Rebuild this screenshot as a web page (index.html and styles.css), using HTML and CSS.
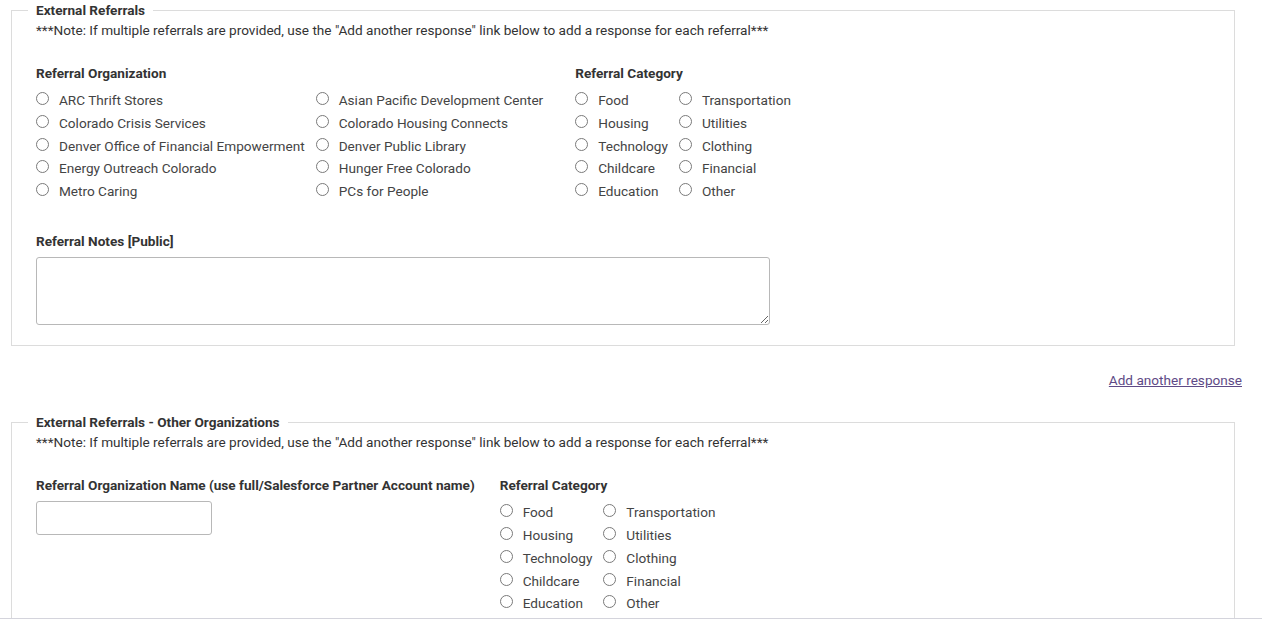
FILE: index.html
```html
<!DOCTYPE html>
<html lang="en">
<head>
<meta charset="utf-8">
<title>External Referrals</title>
<link rel="stylesheet" href="styles.css">
</head>
<body>
<div class="page">
  <fieldset class="section">
    <legend class="section-title">External Referrals</legend>
    <div class="section-body">
      <p class="note">***Note: If multiple referrals are provided, use the "Add another response" link below to add a response for each referral***</p>
      <div class="groups">
        <div class="group">
          <div class="label">Referral Organization</div>
          <div class="options">
            <label class="opt"><input type="radio" name="org"><span>ARC Thrift Stores</span></label>
            <label class="opt"><input type="radio" name="org"><span>Asian Pacific Development Center</span></label>
            <label class="opt"><input type="radio" name="org"><span>Colorado Crisis Services</span></label>
            <label class="opt"><input type="radio" name="org"><span>Colorado Housing Connects</span></label>
            <label class="opt"><input type="radio" name="org"><span>Denver Office of Financial Empowerment</span></label>
            <label class="opt"><input type="radio" name="org"><span>Denver Public Library</span></label>
            <label class="opt"><input type="radio" name="org"><span>Energy Outreach Colorado</span></label>
            <label class="opt"><input type="radio" name="org"><span>Hunger Free Colorado</span></label>
            <label class="opt"><input type="radio" name="org"><span>Metro Caring</span></label>
            <label class="opt"><input type="radio" name="org"><span>PCs for People</span></label>
          </div>
        </div>
        <div class="group">
          <div class="label">Referral Category</div>
          <div class="options">
            <label class="opt"><input type="radio" name="cat1"><span>Food</span></label>
            <label class="opt"><input type="radio" name="cat1"><span>Transportation</span></label>
            <label class="opt"><input type="radio" name="cat1"><span>Housing</span></label>
            <label class="opt"><input type="radio" name="cat1"><span>Utilities</span></label>
            <label class="opt"><input type="radio" name="cat1"><span>Technology</span></label>
            <label class="opt"><input type="radio" name="cat1"><span>Clothing</span></label>
            <label class="opt"><input type="radio" name="cat1"><span>Childcare</span></label>
            <label class="opt"><input type="radio" name="cat1"><span>Financial</span></label>
            <label class="opt"><input type="radio" name="cat1"><span>Education</span></label>
            <label class="opt"><input type="radio" name="cat1"><span>Other</span></label>
          </div>
        </div>
      </div>
      <div class="label notes-label">Referral Notes [Public]</div>
      <textarea class="notes"></textarea>
    </div>
  </fieldset>

  <div class="add-row"><a class="add-link" href="#">Add another response</a></div>

  <fieldset class="section">
    <legend class="section-title">External Referrals - Other Organizations</legend>
    <div class="section-body">
      <p class="note">***Note: If multiple referrals are provided, use the "Add another response" link below to add a response for each referral***</p>
      <div class="groups groups-other">
        <div class="group">
          <div class="label">Referral Organization Name (use full/Salesforce Partner Account name)</div>
          <input class="text-input" type="text">
        </div>
        <div class="group">
          <div class="label">Referral Category</div>
          <div class="options">
            <label class="opt"><input type="radio" name="cat2"><span>Food</span></label>
            <label class="opt"><input type="radio" name="cat2"><span>Transportation</span></label>
            <label class="opt"><input type="radio" name="cat2"><span>Housing</span></label>
            <label class="opt"><input type="radio" name="cat2"><span>Utilities</span></label>
            <label class="opt"><input type="radio" name="cat2"><span>Technology</span></label>
            <label class="opt"><input type="radio" name="cat2"><span>Clothing</span></label>
            <label class="opt"><input type="radio" name="cat2"><span>Childcare</span></label>
            <label class="opt"><input type="radio" name="cat2"><span>Financial</span></label>
            <label class="opt"><input type="radio" name="cat2"><span>Education</span></label>
            <label class="opt"><input type="radio" name="cat2"><span>Other</span></label>
          </div>
        </div>
      </div>
    </div>
  </fieldset>
</div>
<div class="bottom-edge"></div>
</body>
</html>
```

FILE: styles.css
```css
html, body {
  margin: 0;
  padding: 0;
  background: #fff;
}

body {
  font-family: Roboto, "Liberation Sans", Arial, sans-serif;
  font-size: 13.6px;
  line-height: 20px;
  color: #333;
  overflow: hidden;
}

.page {
  padding: 0 20px 0 11px;
}

.section {
  margin: 0 7px 0 0;
  padding: 0 16px 20px 16px;
  border: 1px solid #dcdcdc;
  min-width: 0;
}

.section-title {
  padding: 0 8px;
  font-weight: 700;
  line-height: 20px;
  color: #333;
}

.section-body {
  padding: 0 8px;
}

.note {
  margin: 0;
  color: #333;
}

.groups {
  display: flex;
  gap: 32px;
  margin-top: 23px;
}

.groups-other {
  gap: 25px;
}

.label {
  font-weight: 700;
  color: #333;
  margin-bottom: 7px;
}

.options {
  display: grid;
  grid-template-columns: auto auto;
  column-gap: 11px;
  row-gap: 2.8px;
}

.opt {
  display: flex;
  align-items: flex-start;
  color: #444;
  white-space: nowrap;
}

.opt input {
  -webkit-appearance: none;
  appearance: none;
  box-sizing: border-box;
  margin: 2px 10px 0 0;
  width: 13px;
  height: 13px;
  border: 1px solid #7a7a7a;
  border-radius: 50%;
  background: #fff;
  flex: none;
}

.notes-label {
  margin-top: 30px;
  margin-bottom: 6px;
}

.notes {
  display: block;
  box-sizing: border-box;
  width: 734px;
  height: 68px;
  border: 1px solid #b8b8b8;
  border-radius: 3px;
  font: inherit;
  margin: 0;
}

.add-row {
  display: flex;
  justify-content: flex-end;
  margin: 24px 0 22px;
}

.add-link {
  color: #5e4a86;
  text-decoration: underline;
}

.text-input {
  display: block;
  box-sizing: border-box;
  width: 176px;
  height: 34px;
  margin-top: -1px;
  border: 1px solid #b8b8b8;
  border-radius: 3px;
  font: inherit;
}

.bottom-edge {
  position: fixed;
  left: 0;
  right: 0;
  bottom: 0;
  height: 1px;
  background: #d4d4dc;
}
```
